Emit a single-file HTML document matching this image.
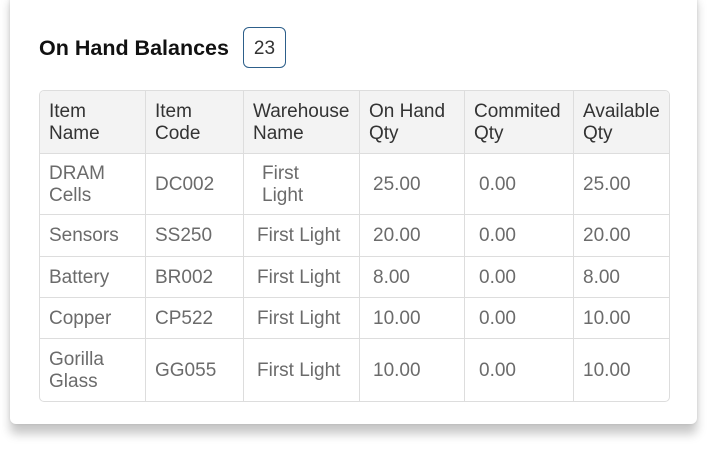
<!DOCTYPE html>
<html><head><style>
body{margin:0;width:708px;height:451px;background:#fff;font-family:"Liberation Sans",sans-serif;position:relative;overflow:hidden}
.card{position:absolute;left:10px;top:-10px;width:687px;height:434px;background:#fff;border-radius:6px;box-shadow:0 10px 10px rgba(0,0,0,0.22),0 0 3px rgba(0,0,0,0.1)}
.title{position:absolute;left:39px;top:36px;font-size:21.5px;font-weight:bold;color:#111}
.badge{position:absolute;left:243px;top:27px;width:41px;height:39px;border:1px solid #2d5f8a;border-radius:6px;font-size:19px;color:#333;text-align:center;line-height:41px}
table{position:absolute;left:39px;top:90px;border-collapse:separate;border-spacing:0;border:1px solid #ddd;border-radius:5px;overflow:hidden;font-size:19px;color:#6b6b6b}
td,th{border-right:1px solid #ddd;border-bottom:1px solid #ddd;text-align:left;padding:1px 0 0 9px;line-height:22px;font-weight:normal;vertical-align:middle;white-space:nowrap}
th{background:#f3f3f3;color:#333;height:61px}
tr td:last-child,tr th:last-child{border-right:none}
tr:last-child td{border-bottom:none}
.c4{padding-left:13px}.c5{padding-left:14px}
</style></head><body>
<div class="card"></div>
<div class="title">On Hand Balances</div>
<div class="badge">23</div>
<table>
<colgroup><col style="width:106px"><col style="width:98px"><col style="width:116px"><col style="width:105px"><col style="width:109px"><col style="width:95px"></colgroup>
<tr><th>Item<br>Name</th><th>Item<br>Code</th><th>Warehouse<br>Name</th><th>On Hand<br>Qty</th><th>Commited<br>Qty</th><th>Available<br>Qty</th></tr>
<tr style="height:61px"><td>DRAM<br>Cells</td><td>DC002</td><td style="padding-left:18px">First<br>Light</td><td class="c4">25.00</td><td class="c5">0.00</td><td>25.00</td></tr>
<tr style="height:42px"><td>Sensors</td><td>SS250</td><td class="c4">First Light</td><td class="c4">20.00</td><td class="c5">0.00</td><td>20.00</td></tr>
<tr style="height:41px"><td>Battery</td><td>BR002</td><td class="c4">First Light</td><td class="c4">8.00</td><td class="c5">0.00</td><td>8.00</td></tr>
<tr style="height:41px"><td>Copper</td><td>CP522</td><td class="c4">First Light</td><td class="c4">10.00</td><td class="c5">0.00</td><td>10.00</td></tr>
<tr style="height:62px"><td>Gorilla<br>Glass</td><td>GG055</td><td class="c4">First Light</td><td class="c4">10.00</td><td class="c5">0.00</td><td>10.00</td></tr>
</table>
</body></html>
